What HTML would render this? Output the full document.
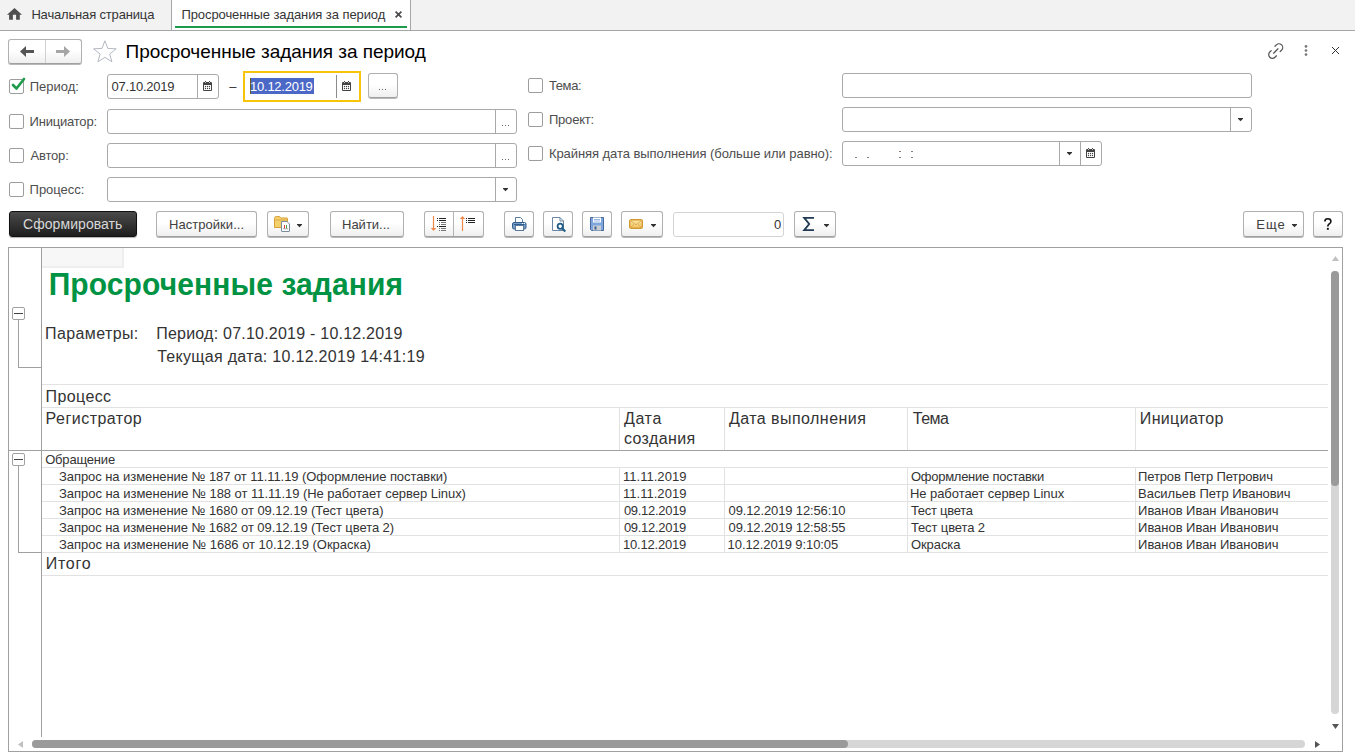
<!DOCTYPE html>
<html><head><meta charset="utf-8">
<style>
*{box-sizing:border-box;margin:0;padding:0}
html,body{width:1355px;height:756px;overflow:hidden;background:#fff;font-family:"Liberation Sans",sans-serif;color:#4d4d4d}
.a{position:absolute}
.t{position:absolute;white-space:nowrap;line-height:1}
.inp{position:absolute;border:1px solid #a9a9a9;border-radius:3px;background:#fff}
.btn{position:absolute;border:1px solid #b0b0b0;border-bottom-color:#a0a0a0;border-radius:3px;background:linear-gradient(#fff 45%,#efefef);box-shadow:0 1px 0 rgba(0,0,0,.28)}
.cb{position:absolute;width:15px;height:15px;border:1px solid #9d9d9d;border-radius:2px;background:#fff}
svg{position:absolute;overflow:visible}
</style></head><body>
<div class="a" style="left:0px;top:0px;width:1355px;height:31px;background:#f2f2f2;border-bottom:1px solid #a6a6a6"></div>
<svg style="left:7px;top:8px" width="15" height="12" viewBox="0 0 15 12"><path d="M7.5 0 L15 6.7 L12.8 6.7 L12.8 11.8 L9.1 11.8 L9.1 6.7 L5.9 6.7 L5.9 11.8 L2.1 11.8 L2.1 6.7 L0 6.7 Z" fill="#505050"/></svg>
<div class="t" style="left:31.40px;top:8.30px;font-size:13px;letter-spacing:-0.165px;color:#353535;">Начальная страница</div>
<div class="a" style="left:172px;top:0px;width:238px;height:30px;background:#fff"></div>
<div class="a" style="left:171px;top:0px;width:1px;height:30px;background:#a6a6a6"></div>
<div class="a" style="left:410px;top:0px;width:1px;height:30px;background:#a6a6a6"></div>
<div class="t" style="left:181.40px;top:7.90px;font-size:13px;letter-spacing:-0.079px;color:#353535;">Просроченные задания за период</div>
<svg style="left:395px;top:11px" width="7" height="7" viewBox="0 0 7 7"><path d="M0.6 0.6 L6.4 6.4 M6.4 0.6 L0.6 6.4" stroke="#4a4a4a" stroke-width="1.7"/></svg>
<div class="a" style="left:175px;top:26px;width:232px;height:2px;background:#1d9b4a"></div>
<div class="btn" style="left:8px;top:39px;width:74px;height:25px;"></div>
<div class="a" style="left:45px;top:40px;width:1px;height:23px;background:#d0d0d0"></div>
<svg style="left:20px;top:46px" width="14" height="11" viewBox="0 0 14 11"><path d="M0 5.5 L6 0 L6 4 L14 4 L14 7 L6 7 L6 11 Z" fill="#555"/></svg>
<svg style="left:56px;top:46px" width="14" height="11" viewBox="0 0 14 11"><path d="M14 5.5 L8 0 L8 4 L0 4 L0 7 L8 7 L8 11 Z" fill="#a6a6a6"/></svg>
<svg style="left:92.5px;top:40px" width="24" height="23" viewBox="0 0 24 23"><path d="M11.9 0.8 L14.8 8.4 L23.2 8.8 L16.7 14 L18.9 21.8 L11.9 17.3 L4.9 21.8 L7.1 14 L0.6 8.8 L9 8.4 Z" fill="none" stroke="#b4b9c1" stroke-width="1"/></svg>
<div class="t" style="left:125.60px;top:42.12px;font-size:19px;letter-spacing:-0.041px;color:#000;">Просроченные задания за период</div>
<svg style="left:1267.5px;top:42.5px" width="16" height="16" viewBox="0 0 16 16"><g fill="none" stroke="#555" stroke-width="1.25" stroke-linecap="round"><path d="M5.6 10.2 L10 5.8"/><path d="M6.97 3.29 L8.38 1.88 A3.7 3.7 0 0 1 13.62 7.12 L12.2 8.53"/><path d="M3.2 7.57 L1.78 8.98 A3.7 3.7 0 0 0 7.02 14.22 L8.43 12.8"/></g></svg>
<svg style="left:1303.5px;top:44px" width="4" height="13" viewBox="0 0 4 13"><circle cx="2" cy="2.4" r="1.35" fill="#777"/><circle cx="2" cy="6.5" r="1.35" fill="#777"/><circle cx="2" cy="10.6" r="1.35" fill="#777"/></svg>
<svg style="left:1332px;top:47px" width="7" height="7" viewBox="0 0 7 7"><path d="M0 0 L7 7 M7 0 L0 7" stroke="#333" stroke-width="1"/></svg>
<div class="cb" style="left:9px;top:79px;width:15px;height:15px;"></div>
<svg style="left:11px;top:77px" width="15" height="15" viewBox="0 0 15 15"><path d="M2 8 L5.5 11.5 L13 2" fill="none" stroke="#1d9b4a" stroke-width="2.6" stroke-linecap="round" stroke-linejoin="round"/></svg>
<div class="t" style="left:29.80px;top:80.00px;font-size:13px;letter-spacing:-0.017px;color:#4d4d4d;">Период:</div>
<div class="inp" style="left:107px;top:74px;width:112px;height:25px;"></div>
<div class="a" style="left:197px;top:75px;width:1px;height:23px;background:#a9a9a9"></div>
<div class="t" style="left:111.50px;top:80.00px;font-size:13px;letter-spacing:-0.222px;color:#333;">07.10.2019</div>
<svg style="left:203px;top:81px" width="9" height="10" viewBox="0 0 9 10"><rect x="0" y="1" width="9" height="9" rx="1" fill="#444"/><rect x="1" y="4" width="7" height="5" fill="#fff"/><rect x="2" y="0" width="1" height="2" fill="#444"/><rect x="6" y="0" width="1" height="2" fill="#444"/><rect x="2" y="1" width="1" height="1" fill="#fff" opacity=".7"/><rect x="6" y="1" width="1" height="1" fill="#fff" opacity=".7"/><g fill="#444"><circle cx="2.5" cy="5.5" r=".65"/><circle cx="4.5" cy="5.5" r=".65"/><circle cx="6.5" cy="5.5" r=".65"/><circle cx="2.5" cy="7.5" r=".65"/><circle cx="4.5" cy="7.5" r=".65"/><circle cx="6.5" cy="7.5" r=".65"/></g></svg>
<div class="t" style="left:229.20px;top:80.00px;font-size:13px;color:#333;">–</div>
<div class="a" style="left:243px;top:71px;width:118px;height:31px;border:2px solid #f8c409;background:#fff"></div>
<div class="a" style="left:336px;top:75px;width:1px;height:23px;background:#8c8c8c"></div>
<div class="a" style="left:250px;top:78px;width:64px;height:16px;background:#4b68c6"></div>
<div class="a" style="left:250px;top:78px;width:1px;height:16px;background:#6b5a20"></div>
<div class="t" style="left:250.10px;top:80.00px;font-size:13px;letter-spacing:-0.256px;color:#fff;">10.12.2019</div>
<svg style="left:342px;top:81px" width="9" height="10" viewBox="0 0 9 10"><rect x="0" y="1" width="9" height="9" rx="1" fill="#444"/><rect x="1" y="4" width="7" height="5" fill="#fff"/><rect x="2" y="0" width="1" height="2" fill="#444"/><rect x="6" y="0" width="1" height="2" fill="#444"/><rect x="2" y="1" width="1" height="1" fill="#fff" opacity=".7"/><rect x="6" y="1" width="1" height="1" fill="#fff" opacity=".7"/><g fill="#444"><circle cx="2.5" cy="5.5" r=".65"/><circle cx="4.5" cy="5.5" r=".65"/><circle cx="6.5" cy="5.5" r=".65"/><circle cx="2.5" cy="7.5" r=".65"/><circle cx="4.5" cy="7.5" r=".65"/><circle cx="6.5" cy="7.5" r=".65"/></g></svg>
<div class="btn" style="left:368px;top:73px;width:30px;height:25px;"></div>
<svg style="left:379px;top:89px" width="8" height="2" viewBox="0 0 8 2"><rect x="0" y="0" width="1" height="1" fill="#666"/><rect x="3" y="0" width="1" height="1" fill="#666"/><rect x="6" y="0" width="1" height="1" fill="#666"/></svg>
<div class="cb" style="left:528px;top:78px;width:15px;height:15px;"></div>
<div class="t" style="left:548.90px;top:79.00px;font-size:13px;letter-spacing:-0.375px;color:#4d4d4d;">Тема:</div>
<div class="inp" style="left:842px;top:73px;width:410px;height:25px;"></div>
<div class="cb" style="left:9px;top:114px;width:15px;height:15px;"></div>
<div class="t" style="left:29.60px;top:115.00px;font-size:13px;letter-spacing:-0.211px;color:#4d4d4d;">Инициатор:</div>
<div class="inp" style="left:107px;top:109px;width:410px;height:25px;"></div>
<div class="a" style="left:495px;top:110px;width:1px;height:23px;background:#a9a9a9"></div>
<svg style="left:502px;top:125px" width="8" height="2" viewBox="0 0 8 2"><rect x="0" y="0" width="1" height="1" fill="#666"/><rect x="3" y="0" width="1" height="1" fill="#666"/><rect x="6" y="0" width="1" height="1" fill="#666"/></svg>
<div class="cb" style="left:528px;top:112px;width:15px;height:15px;"></div>
<div class="t" style="left:548.90px;top:113.00px;font-size:13px;letter-spacing:-0.183px;color:#4d4d4d;">Проект:</div>
<div class="inp" style="left:842px;top:107px;width:410px;height:25px;"></div>
<div class="a" style="left:1230px;top:108px;width:1px;height:23px;background:#a9a9a9"></div>
<svg style="left:1238px;top:118px" width="5" height="4" viewBox="0 0 5 4"><path d="M0 0 H5 V0.8 L2.5 3.3 L0 0.8 Z" fill="#333"/></svg>
<div class="cb" style="left:9px;top:148px;width:15px;height:15px;"></div>
<div class="t" style="left:30.60px;top:149.00px;font-size:13px;letter-spacing:-0.200px;color:#4d4d4d;">Автор:</div>
<div class="inp" style="left:107px;top:143px;width:410px;height:25px;"></div>
<div class="a" style="left:495px;top:144px;width:1px;height:23px;background:#a9a9a9"></div>
<svg style="left:502px;top:159px" width="8" height="2" viewBox="0 0 8 2"><rect x="0" y="0" width="1" height="1" fill="#666"/><rect x="3" y="0" width="1" height="1" fill="#666"/><rect x="6" y="0" width="1" height="1" fill="#666"/></svg>
<div class="cb" style="left:528px;top:146px;width:15px;height:15px;"></div>
<div class="t" style="left:548.90px;top:147.20px;font-size:13px;letter-spacing:-0.064px;color:#4d4d4d;">Крайняя дата выполнения (больше или равно):</div>
<div class="inp" style="left:842px;top:141px;width:260px;height:25px;"></div>
<div class="a" style="left:1059px;top:142px;width:1px;height:23px;background:#a9a9a9"></div>
<div class="a" style="left:1080px;top:142px;width:1px;height:23px;background:#a9a9a9"></div>
<svg style="left:1067px;top:152px" width="5" height="4" viewBox="0 0 5 4"><path d="M0 0 H5 V0.8 L2.5 3.3 L0 0.8 Z" fill="#333"/></svg>
<svg style="left:1086px;top:148px" width="9" height="10" viewBox="0 0 9 10"><rect x="0" y="1" width="9" height="9" rx="1" fill="#444"/><rect x="1" y="4" width="7" height="5" fill="#fff"/><rect x="2" y="0" width="1" height="2" fill="#444"/><rect x="6" y="0" width="1" height="2" fill="#444"/><rect x="2" y="1" width="1" height="1" fill="#fff" opacity=".7"/><rect x="6" y="1" width="1" height="1" fill="#fff" opacity=".7"/><g fill="#444"><circle cx="2.5" cy="5.5" r=".65"/><circle cx="4.5" cy="5.5" r=".65"/><circle cx="6.5" cy="5.5" r=".65"/><circle cx="2.5" cy="7.5" r=".65"/><circle cx="4.5" cy="7.5" r=".65"/><circle cx="6.5" cy="7.5" r=".65"/></g></svg>
<div class="a" style="left:855px;top:157px;width:2px;height:1px;background:#8a7a70"></div>
<div class="a" style="left:867px;top:157px;width:2px;height:1px;background:#8a7a70"></div>
<div class="a" style="left:899px;top:151px;width:2px;height:1px;background:#8a7a70"></div>
<div class="a" style="left:899px;top:157px;width:2px;height:1px;background:#8a7a70"></div>
<div class="a" style="left:911px;top:151px;width:2px;height:1px;background:#8a7a70"></div>
<div class="a" style="left:911px;top:157px;width:2px;height:1px;background:#8a7a70"></div>
<div class="cb" style="left:9px;top:182px;width:15px;height:15px;"></div>
<div class="t" style="left:29.60px;top:183.00px;font-size:13px;letter-spacing:-0.043px;color:#4d4d4d;">Процесс:</div>
<div class="inp" style="left:107px;top:177px;width:410px;height:25px;"></div>
<div class="a" style="left:495px;top:178px;width:1px;height:23px;background:#a9a9a9"></div>
<svg style="left:503px;top:188px" width="5" height="4" viewBox="0 0 5 4"><path d="M0 0 H5 V0.8 L2.5 3.3 L0 0.8 Z" fill="#333"/></svg>
<div class="a" style="left:9px;top:211px;width:128px;height:26px;background:linear-gradient(#4a4a4a,#1e1e1e);border:1px solid #111;border-radius:3px;box-shadow:0 1px 1px rgba(0,0,0,.3)"></div>
<div class="t" style="left:23.00px;top:217.15px;font-size:14px;letter-spacing:0.064px;color:#d8d8d8;">Сформировать</div>
<div class="btn" style="left:156px;top:211px;width:101px;height:26px;"></div>
<div class="t" style="left:169.00px;top:218.00px;font-size:13px;letter-spacing:0.045px;color:#404040;">Настройки...</div>
<div class="btn" style="left:267px;top:211px;width:42px;height:26px;"></div>
<div class="btn" style="left:330px;top:211px;width:74px;height:26px;"></div>
<div class="t" style="left:342.00px;top:218.00px;font-size:13px;color:#404040;">Найти...</div>
<div class="btn" style="left:424px;top:211px;width:60px;height:26px;"></div>
<div class="a" style="left:453px;top:212px;width:1px;height:24px;background:#b4b4b4"></div>
<div class="btn" style="left:504px;top:211px;width:30px;height:26px;"></div>
<div class="btn" style="left:543px;top:211px;width:30px;height:26px;"></div>
<div class="btn" style="left:582px;top:211px;width:30px;height:26px;"></div>
<div class="btn" style="left:621px;top:211px;width:42px;height:26px;"></div>
<div class="a" style="left:673px;top:212px;width:111px;height:25px;border:1px solid #d4d4d4;border-radius:3px"></div>
<div class="t" style="left:774.00px;top:218.00px;font-size:13px;color:#333;">0</div>
<div class="btn" style="left:794px;top:211px;width:42px;height:26px;"></div>
<svg style="left:274px;top:216px" width="16" height="16" viewBox="0 0 16 16"><path d="M0.5 2.5 Q0.5 0.5 2.5 0.5 L5 0.5 Q6 0.5 6.5 1.5 L7 2 L13 2 Q13.5 2 13.5 2.5 L13.5 11.5 L0.5 11.5 Z" fill="#f3d06a" stroke="#d9a03a" stroke-width="1"/><path d="M0.5 4 H13.5" stroke="#dca84a" stroke-width="1"/><path d="M7.5 5.5 L13 5.5 L15.5 8 L15.5 15 Q15.5 15.5 15 15.5 L8 15.5 Q7.5 15.5 7.5 15 Z" fill="#fff" stroke="#7b8c9c" stroke-width="1"/><rect x="10" y="9" width="1" height="3.5" fill="#e53935"/><rect x="12" y="9" width="1" height="3.5" fill="#43a047"/><rect x="9" y="12.5" width="5" height="0.7" fill="#888"/></svg>
<svg style="left:297px;top:224px" width="5" height="4" viewBox="0 0 5 4"><path d="M0 0 H5 V0.8 L2.5 3.3 L0 0.8 Z" fill="#333"/></svg>
<svg style="left:430px;top:216px" width="17" height="16" viewBox="0 0 17 16"><path d="M3.5 0 V13" stroke="#f08848" stroke-width="1.2"/><path d="M0.8 12 H6.2 L3.5 15 Z" fill="#f08848"/><g fill="#222"><rect x="7" y="2" width="1" height="1"/><rect x="9" y="2" width="7" height="1"/><rect x="7" y="4" width="1" height="1"/><rect x="9" y="4" width="7" height="1"/><rect x="7" y="10" width="1" height="1"/><rect x="9" y="10" width="7" height="1"/></g><g fill="#777"><rect x="9" y="6" width="1" height="1"/><rect x="11" y="6" width="5" height="1"/><rect x="9" y="8" width="1" height="1"/><rect x="11" y="8" width="5" height="1"/><rect x="9" y="12" width="1" height="1"/><rect x="11" y="12" width="5" height="1"/><rect x="9" y="14" width="1" height="1"/><rect x="11" y="14" width="5" height="1"/></g></svg>
<svg style="left:459px;top:216px" width="17" height="16" viewBox="0 0 17 16"><path d="M3.5 2 V15" stroke="#f08848" stroke-width="1.2"/><path d="M0.8 3 H6.2 L3.5 0 Z" fill="#f08848"/><g fill="#222"><rect x="7" y="2" width="1" height="1"/><rect x="9" y="2" width="7" height="1"/><rect x="7" y="4" width="1" height="1"/><rect x="9" y="4" width="7" height="1"/><rect x="7" y="6" width="1" height="1"/><rect x="9" y="6" width="7" height="1"/></g></svg>
<svg style="left:512px;top:217px" width="15" height="14" viewBox="0 0 15 14"><path d="M3.5 0.5 H8.5 L10.5 2.5 V6 H3.5 Z" fill="#fff" stroke="#5b7a99"/><rect x="0.5" y="5.5" width="13.5" height="6.5" rx="1.5" fill="#7a9cc6" stroke="#2f5e8e"/><rect x="2" y="7" width="10.5" height="1" fill="#2f5e8e"/><rect x="10" y="6" width="1" height="1" fill="#fff"/><rect x="12" y="6" width="1" height="1" fill="#fff"/><rect x="3.5" y="8.5" width="8" height="5" fill="#fff" stroke="#5b7a99"/></svg>
<svg style="left:552px;top:217px" width="15" height="16" viewBox="0 0 15 16"><path d="M0.5 0.5 H8 L11.5 4 V13.5 H0.5 Z" fill="#fff" stroke="#6a86a3"/><path d="M8 0.5 V4 H11.5" fill="none" stroke="#6a86a3"/><circle cx="8.2" cy="9.3" r="2.6" fill="#fff" stroke="#1f5b87" stroke-width="1.8"/><path d="M10 11.2 L13.3 14.5" stroke="#1f5b87" stroke-width="2"/></svg>
<svg style="left:590px;top:217px" width="14" height="14" viewBox="0 0 14 14"><path d="M0.5 0.5 H13.5 V13.5 H1.5 L0.5 12.5 Z" fill="#7ea6dc" stroke="#45699c"/><rect x="3" y="0.5" width="8" height="5" fill="#fff"/><rect x="4" y="2" width="6" height="0.8" fill="#7ea6dc"/><rect x="4" y="3.6" width="6" height="0.8" fill="#7ea6dc"/><rect x="3" y="8.5" width="8" height="5" fill="#c7cdd3"/><rect x="4.5" y="9.5" width="2" height="3" fill="#3f5f8f"/></svg>
<svg style="left:629px;top:219px" width="14" height="10" viewBox="0 0 14 10"><defs><linearGradient id="mg" x1="0" y1="0" x2="0" y2="1"><stop offset="0" stop-color="#fbe6a6"/><stop offset="1" stop-color="#f0c260"/></linearGradient></defs><rect x="0.7" y="0.7" width="12.6" height="8.6" rx="1.5" fill="url(#mg)" stroke="#d39a30" stroke-width="1.4"/><path d="M2 2 L7 5.8 L12 2 M1.8 8.3 L5 5.2 M12.2 8.3 L9 5.2" fill="none" stroke="#d9a548" stroke-width=".8"/></svg>
<svg style="left:651px;top:224px" width="5" height="4" viewBox="0 0 5 4"><path d="M0 0 H5 V0.8 L2.5 3.3 L0 0.8 Z" fill="#333"/></svg>
<svg style="left:803px;top:217px" width="11" height="14" viewBox="0 0 11 14"><path d="M11 0.9 H1.2 L6.2 7 L1.2 13.1 H11" fill="none" stroke="#1f3a52" stroke-width="1.8"/></svg>
<svg style="left:824px;top:224px" width="5" height="4" viewBox="0 0 5 4"><path d="M0 0 H5 V0.8 L2.5 3.3 L0 0.8 Z" fill="#333"/></svg>
<div class="btn" style="left:1243px;top:211px;width:61px;height:26px;"></div>
<div class="t" style="left:1256.30px;top:217.60px;font-size:13px;letter-spacing:0.950px;color:#404040;">Еще</div>
<svg style="left:1292px;top:224px" width="5" height="4" viewBox="0 0 5 4"><path d="M0 0 H5 V0.8 L2.5 3.3 L0 0.8 Z" fill="#333"/></svg>
<div class="btn" style="left:1313px;top:211px;width:30px;height:26px;"></div>
<svg style="left:1324.2px;top:217.7px" width="8" height="12" viewBox="0 0 8 12"><path d="M0.9 3.4 C0.9 1.4 2.2 0.8 3.8 0.8 C5.6 0.8 6.9 1.8 6.9 3.4 C6.9 5 5.6 5.6 4.7 6.4 C4 7 3.8 7.6 3.8 8.6" fill="none" stroke="#111" stroke-width="1.6"/><rect x="2.9" y="9.9" width="1.9" height="1.9" fill="#111"/></svg>
<div class="a" style="left:8px;top:247px;width:1335px;height:505px;border:1px solid #a0a0a0"></div>
<div class="a" style="left:41px;top:248px;width:1px;height:489px;background:#a0a0a0"></div>
<div class="a" style="left:42px;top:248px;width:82px;height:20px;background:#f7f7f7;border-right:2px solid #eeeeee;border-bottom:2px solid #eeeeee"></div>
<div class="t" style="left:48.70px;top:270.11px;font-size:30px;letter-spacing:0.105px;color:#009343;font-weight:bold;transform:scaleY(1.05);transform-origin:0 25.4px;">Просроченные задания</div>
<div class="t" style="left:45.10px;top:325.96px;font-size:16px;letter-spacing:0.378px;color:#333;">Параметры:</div>
<div class="t" style="left:156.20px;top:325.96px;font-size:16px;letter-spacing:0.227px;color:#333;">Период: 07.10.2019 - 10.12.2019</div>
<div class="t" style="left:157.20px;top:348.66px;font-size:16px;letter-spacing:0.300px;color:#333;">Текущая дата: 10.12.2019 14:41:19</div>
<div class="a" style="left:12px;top:307px;width:13px;height:13px;border:1px solid #a0a0a0;border-radius:2px;background:#fff"></div>
<div class="a" style="left:14px;top:313px;width:9px;height:1px;background:#444"></div>
<div class="a" style="left:18px;top:320px;width:1px;height:48px;background:#a0a0a0"></div>
<div class="a" style="left:18px;top:367px;width:23px;height:1px;background:#a0a0a0"></div>
<div class="a" style="left:42px;top:384px;width:1286px;height:1px;background:#e2e2e2"></div>
<div class="a" style="left:42px;top:407px;width:1286px;height:1px;background:#e2e2e2"></div>
<div class="a" style="left:42px;top:467px;width:1286px;height:1px;background:#e2e2e2"></div>
<div class="a" style="left:42px;top:484px;width:1286px;height:1px;background:#e2e2e2"></div>
<div class="a" style="left:42px;top:501px;width:1286px;height:1px;background:#e2e2e2"></div>
<div class="a" style="left:42px;top:518px;width:1286px;height:1px;background:#e2e2e2"></div>
<div class="a" style="left:42px;top:535px;width:1286px;height:1px;background:#e2e2e2"></div>
<div class="a" style="left:42px;top:552px;width:1286px;height:1px;background:#e2e2e2"></div>
<div class="a" style="left:42px;top:575px;width:1286px;height:1px;background:#e2e2e2"></div>
<div class="a" style="left:8px;top:450px;width:1320px;height:1px;background:#a0a0a0"></div>
<div class="a" style="left:619px;top:407px;width:1px;height:43px;background:#e2e2e2"></div>
<div class="a" style="left:619px;top:467px;width:1px;height:85px;background:#e2e2e2"></div>
<div class="a" style="left:724px;top:407px;width:1px;height:43px;background:#e2e2e2"></div>
<div class="a" style="left:724px;top:467px;width:1px;height:85px;background:#e2e2e2"></div>
<div class="a" style="left:907px;top:407px;width:1px;height:43px;background:#e2e2e2"></div>
<div class="a" style="left:907px;top:467px;width:1px;height:85px;background:#e2e2e2"></div>
<div class="a" style="left:1135px;top:407px;width:1px;height:43px;background:#e2e2e2"></div>
<div class="a" style="left:1135px;top:467px;width:1px;height:85px;background:#e2e2e2"></div>
<div class="t" style="left:45.60px;top:388.66px;font-size:16px;letter-spacing:0.383px;color:#333;">Процесс</div>
<div class="t" style="left:45.60px;top:411.46px;font-size:16px;letter-spacing:0.480px;color:#333;">Регистратор</div>
<div class="t" style="left:623.90px;top:411.46px;font-size:16px;letter-spacing:0.667px;color:#333;">Дата</div>
<div class="t" style="left:623.90px;top:431.16px;font-size:16px;letter-spacing:0.400px;color:#333;">создания</div>
<div class="t" style="left:729.00px;top:411.46px;font-size:16px;letter-spacing:0.443px;color:#333;">Дата выполнения</div>
<div class="t" style="left:912.80px;top:411.46px;font-size:16px;letter-spacing:-0.500px;color:#333;">Тема</div>
<div class="t" style="left:1139.80px;top:411.46px;font-size:16px;letter-spacing:0.350px;color:#333;">Инициатор</div>
<div class="a" style="left:12px;top:453px;width:13px;height:13px;border:1px solid #a0a0a0;border-radius:2px;background:#fff"></div>
<div class="a" style="left:14px;top:459px;width:9px;height:1px;background:#444"></div>
<div class="a" style="left:18px;top:466px;width:1px;height:87px;background:#a0a0a0"></div>
<div class="a" style="left:18px;top:552px;width:23px;height:1px;background:#a0a0a0"></div>
<div class="t" style="left:45.20px;top:453.00px;font-size:13px;letter-spacing:-0.188px;color:#333;">Обращение</div>
<div class="t" style="left:59.00px;top:470.10px;font-size:13px;letter-spacing:-0.064px;color:#333;">Запрос на изменение № 187 от 11.11.19 (Оформление поставки)</div>
<div class="t" style="left:622.90px;top:470.10px;font-size:13px;letter-spacing:0.044px;color:#333;">11.11.2019</div>
<div class="t" style="left:728.00px;top:470.10px;font-size:13px;color:#333;"></div>
<div class="t" style="left:910.90px;top:470.10px;font-size:13px;letter-spacing:-0.256px;color:#333;">Оформление поставки</div>
<div class="t" style="left:1138.10px;top:470.10px;font-size:13px;letter-spacing:-0.137px;color:#333;">Петров Петр Петрович</div>
<div class="t" style="left:59.00px;top:487.10px;font-size:13px;letter-spacing:-0.040px;color:#333;">Запрос на изменение № 188 от 11.11.19 (Не работает сервер Linux)</div>
<div class="t" style="left:622.90px;top:487.10px;font-size:13px;letter-spacing:0.044px;color:#333;">11.11.2019</div>
<div class="t" style="left:728.00px;top:487.10px;font-size:13px;color:#333;"></div>
<div class="t" style="left:909.90px;top:487.10px;font-size:13px;letter-spacing:-0.048px;color:#333;">Не работает сервер Linux</div>
<div class="t" style="left:1138.10px;top:487.10px;font-size:13px;letter-spacing:-0.043px;color:#333;">Васильев Петр Иванович</div>
<div class="t" style="left:59.00px;top:504.10px;font-size:13px;letter-spacing:-0.066px;color:#333;">Запрос на изменение № 1680 от 09.12.19 (Тест цвета)</div>
<div class="t" style="left:623.90px;top:504.10px;font-size:13px;letter-spacing:-0.289px;color:#333;">09.12.2019</div>
<div class="t" style="left:728.60px;top:504.10px;font-size:13px;letter-spacing:-0.133px;color:#333;">09.12.2019 12:56:10</div>
<div class="t" style="left:910.90px;top:504.10px;font-size:13px;letter-spacing:-0.267px;color:#333;">Тест цвета</div>
<div class="t" style="left:1138.10px;top:504.10px;font-size:13px;letter-spacing:-0.037px;color:#333;">Иванов Иван Иванович</div>
<div class="t" style="left:59.00px;top:521.10px;font-size:13px;letter-spacing:-0.069px;color:#333;">Запрос на изменение № 1682 от 09.12.19 (Тест цвета 2)</div>
<div class="t" style="left:623.90px;top:521.10px;font-size:13px;letter-spacing:-0.289px;color:#333;">09.12.2019</div>
<div class="t" style="left:728.60px;top:521.10px;font-size:13px;letter-spacing:-0.133px;color:#333;">09.12.2019 12:58:55</div>
<div class="t" style="left:910.90px;top:521.10px;font-size:13px;letter-spacing:-0.109px;color:#333;">Тест цвета 2</div>
<div class="t" style="left:1138.10px;top:521.10px;font-size:13px;letter-spacing:-0.037px;color:#333;">Иванов Иван Иванович</div>
<div class="t" style="left:59.00px;top:538.10px;font-size:13px;letter-spacing:-0.028px;color:#333;">Запрос на изменение № 1686 от 10.12.19 (Окраска)</div>
<div class="t" style="left:622.90px;top:538.10px;font-size:13px;letter-spacing:-0.178px;color:#333;">10.12.2019</div>
<div class="t" style="left:727.60px;top:538.10px;font-size:13px;letter-spacing:-0.082px;color:#333;">10.12.2019 9:10:05</div>
<div class="t" style="left:910.90px;top:538.10px;font-size:13px;letter-spacing:-0.067px;color:#333;">Окраска</div>
<div class="t" style="left:1138.10px;top:538.10px;font-size:13px;letter-spacing:-0.037px;color:#333;">Иванов Иван Иванович</div>
<div class="t" style="left:45.80px;top:556.26px;font-size:16px;letter-spacing:0.700px;color:#333;">Итого</div>
<svg style="left:1332px;top:256px" width="7" height="5" viewBox="0 0 7 5"><path d="M0 5 L3.5 0 L7 5 Z" fill="#c0c0c0"/></svg>
<div class="a" style="left:1331px;top:271px;width:8px;height:443px;background:#d6d6d6;border-radius:4px"></div>
<div class="a" style="left:1331px;top:271px;width:8px;height:215px;background:#9a9a9a;border-radius:4px"></div>
<svg style="left:1332px;top:724px" width="7" height="5" viewBox="0 0 7 5"><path d="M0 0 L7 0 L3.5 5 Z" fill="#555"/></svg>
<svg style="left:18px;top:741px" width="5" height="7" viewBox="0 0 5 7"><path d="M5 0 L5 7 L0 3.5 Z" fill="#c0c0c0"/></svg>
<div class="a" style="left:32px;top:740px;width:1273px;height:8px;background:#d6d6d6;border-radius:4px"></div>
<div class="a" style="left:32px;top:740px;width:816px;height:8px;background:#9a9a9a;border-radius:4px"></div>
<svg style="left:1315px;top:741px" width="5" height="7" viewBox="0 0 5 7"><path d="M0 0 L0 7 L5 3.5 Z" fill="#555"/></svg>
</body></html>
